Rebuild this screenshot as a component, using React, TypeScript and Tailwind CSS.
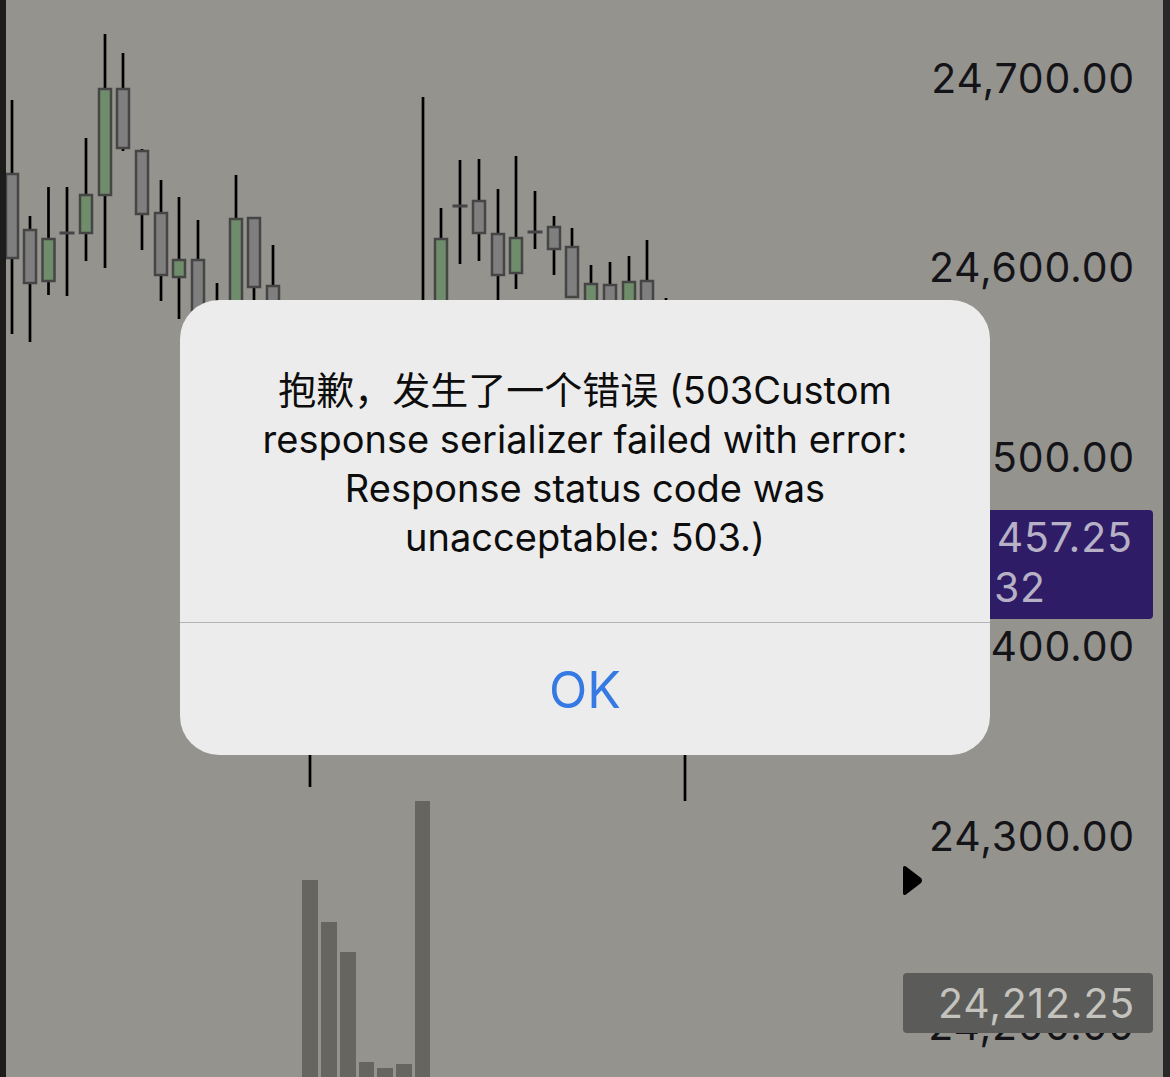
import React from "react";

type Candle = {
  x: number;
  hi: number;
  lo: number;
  open?: number;
  close?: number;
  up?: boolean;
};

// pixel coordinates, read straight off the chart
const candles: Candle[] = [
  { x: 12, hi: 100, lo: 334, open: 174, close: 258 },
  { x: 30, hi: 216, lo: 342, open: 230, close: 283 },
  { x: 48.5, hi: 187, lo: 295, open: 239, close: 281, up: true },
  { x: 67, hi: 187, lo: 296, open: 233, close: 233 },
  { x: 86, hi: 138, lo: 261, open: 195, close: 233, up: true },
  { x: 105, hi: 34, lo: 268, open: 89, close: 195, up: true },
  { x: 123, hi: 53, lo: 151, open: 89, close: 148 },
  { x: 142, hi: 149, lo: 250, open: 151, close: 214 },
  { x: 161, hi: 180, lo: 301, open: 213, close: 275 },
  { x: 179, hi: 197, lo: 319, open: 260, close: 277, up: true },
  { x: 198, hi: 220, lo: 420, open: 260, close: 400 },
  { x: 217, hi: 283, lo: 420, open: 320, close: 380 },
  { x: 236, hi: 175, lo: 420, open: 219, close: 400, up: true },
  { x: 254, hi: 218, lo: 420, open: 218, close: 287 },
  { x: 273, hi: 245, lo: 420, open: 286, close: 400 },
  { x: 310, hi: 360, lo: 787, open: 420, close: 700 },
  { x: 423, hi: 97, lo: 420 },
  { x: 441, hi: 208, lo: 420, open: 239, close: 400, up: true },
  { x: 460, hi: 160, lo: 264, open: 206, close: 206 },
  { x: 479, hi: 159, lo: 261, open: 201, close: 233 },
  { x: 498, hi: 189, lo: 420, open: 234, close: 275 },
  { x: 516, hi: 156, lo: 289, open: 238, close: 273, up: true },
  { x: 535, hi: 191, lo: 249, open: 232, close: 232 },
  { x: 554, hi: 216, lo: 275, open: 227, close: 249 },
  { x: 572, hi: 228, lo: 298, open: 247, close: 297 },
  { x: 591, hi: 265, lo: 420, open: 284, close: 400, up: true },
  { x: 610, hi: 262, lo: 420, open: 285, close: 400 },
  { x: 629, hi: 256, lo: 420, open: 282, close: 400, up: true },
  { x: 647, hi: 240, lo: 420, open: 281, close: 400 },
  { x: 666, hi: 298, lo: 420 },
  { x: 685, hi: 420, lo: 801 },
];

const volumes = [
  { x: 302, w: 16, top: 880 },
  { x: 321, w: 16, top: 922 },
  { x: 340, w: 16, top: 952 },
  { x: 359, w: 15, top: 1062 },
  { x: 377, w: 16, top: 1068 },
  { x: 396, w: 16, top: 1064 },
  { x: 415, w: 15, top: 801 },
];

const prices = ["24,700.00", "24,600.00", "24,500.00", "24,400.00", "24,300.00", "24,200.00"];

function Chart() {
  return (
    <svg viewBox="6 0 894 1077" className="block h-[1077px] w-[894px]">
      {volumes.map((v) => (
        <rect key={v.x} x={v.x} y={v.top} width={v.w} height={1077 - v.top} fill="#66655f" />
      ))}
      {candles.map((c) => {
        const doji = c.open !== undefined && c.open === c.close;
        return (
          <g key={c.x}>
            <line x1={c.x} x2={c.x} y1={c.hi} y2={c.lo} stroke="#000" strokeWidth={2.7} />
            {c.open !== undefined && !doji && (
              <rect
                x={c.x - 6}
                y={c.open}
                width={12}
                height={(c.close ?? 0) - c.open}
                fill={c.up ? "#6f8c6b" : "#7f7f7f"}
                stroke="#454545"
                strokeWidth={2.5}
              />
            )}
            {doji && <rect x={c.x - 7.5} y={(c.open ?? 0) - 1.5} width={15} height={3} fill="#454545" />}
          </g>
        );
      })}
    </svg>
  );
}

function PriceAxis() {
  return (
    <div className="relative w-[263px] shrink-0 text-[41px] tracking-[0.8px]">
      <div className="flex flex-col items-end gap-[139.5px] pr-[28px] pt-[53px]">
        {prices.map((p) => (
          <div key={p} className="flex h-[50px] items-center leading-none text-[#141418]">
            {p}
          </div>
        ))}
      </div>

      {/* last price marker */}
      <svg viewBox="0 0 20 31" className="absolute left-[3px] top-[865px] h-[31px] w-[20px]">
        <path d="M3 1.5 L18 13 Q20 15.5 18 18 L3 29.5 Q0 31 0 28 L0 3 Q0 0 3 1.5 Z" fill="#000" />
      </svg>

      <div className="absolute left-[3px] top-[510px] h-[109px] w-[250px] rounded-[4px] bg-[#2f1c66] pl-[26px] pt-[2px] leading-[50px] text-[#b7b1c6]">
        <div>
          24,<span className="ml-[4px]">457.25</span>
        </div>
        <div className="-ml-[5px]">
          00:<span className="ml-[4px]">32</span>
        </div>
      </div>

      <div className="absolute left-[3px] top-[973px] flex h-[60px] w-[250px] items-center justify-end rounded-[4px] bg-[#5b5b5a] pr-[18px] leading-none text-[#c4c3be]">
        24,212.25
      </div>
    </div>
  );
}

function Alert() {
  return (
    <div className="absolute inset-0 flex justify-center pt-[300px]">
      <div className="flex h-[455px] w-[810px] flex-col rounded-[39px] bg-[#ececec]">
        <div className="flex-1 px-[40px] pt-[66px] text-center text-[38px] leading-[49px] text-[#0d0d0d]">
          抱歉，发生了一个错误 (503Custom
          <br />
          response serializer failed with error:
          <br />
          Response status code was
          <br />
          unacceptable: 503.)
        </div>
        <div className="h-px bg-[#b3b3b3]" />
        <div className="flex h-[132px] items-center justify-center pt-[3px] text-[50px] text-[#3579e3]">OK</div>
      </div>
    </div>
  );
}

export default function App() {
  return (
    <div className="relative flex h-[1077px] w-[1170px] overflow-hidden bg-[#94938e] font-['Inter','Noto_Sans_CJK_SC',sans-serif]">
      <div className="w-[6px] shrink-0 bg-[#1c1c1c]" />
      <Chart />
      <PriceAxis />
      <div className="w-[7px] shrink-0 bg-[#292929]" />
      <Alert />
    </div>
  );
}
